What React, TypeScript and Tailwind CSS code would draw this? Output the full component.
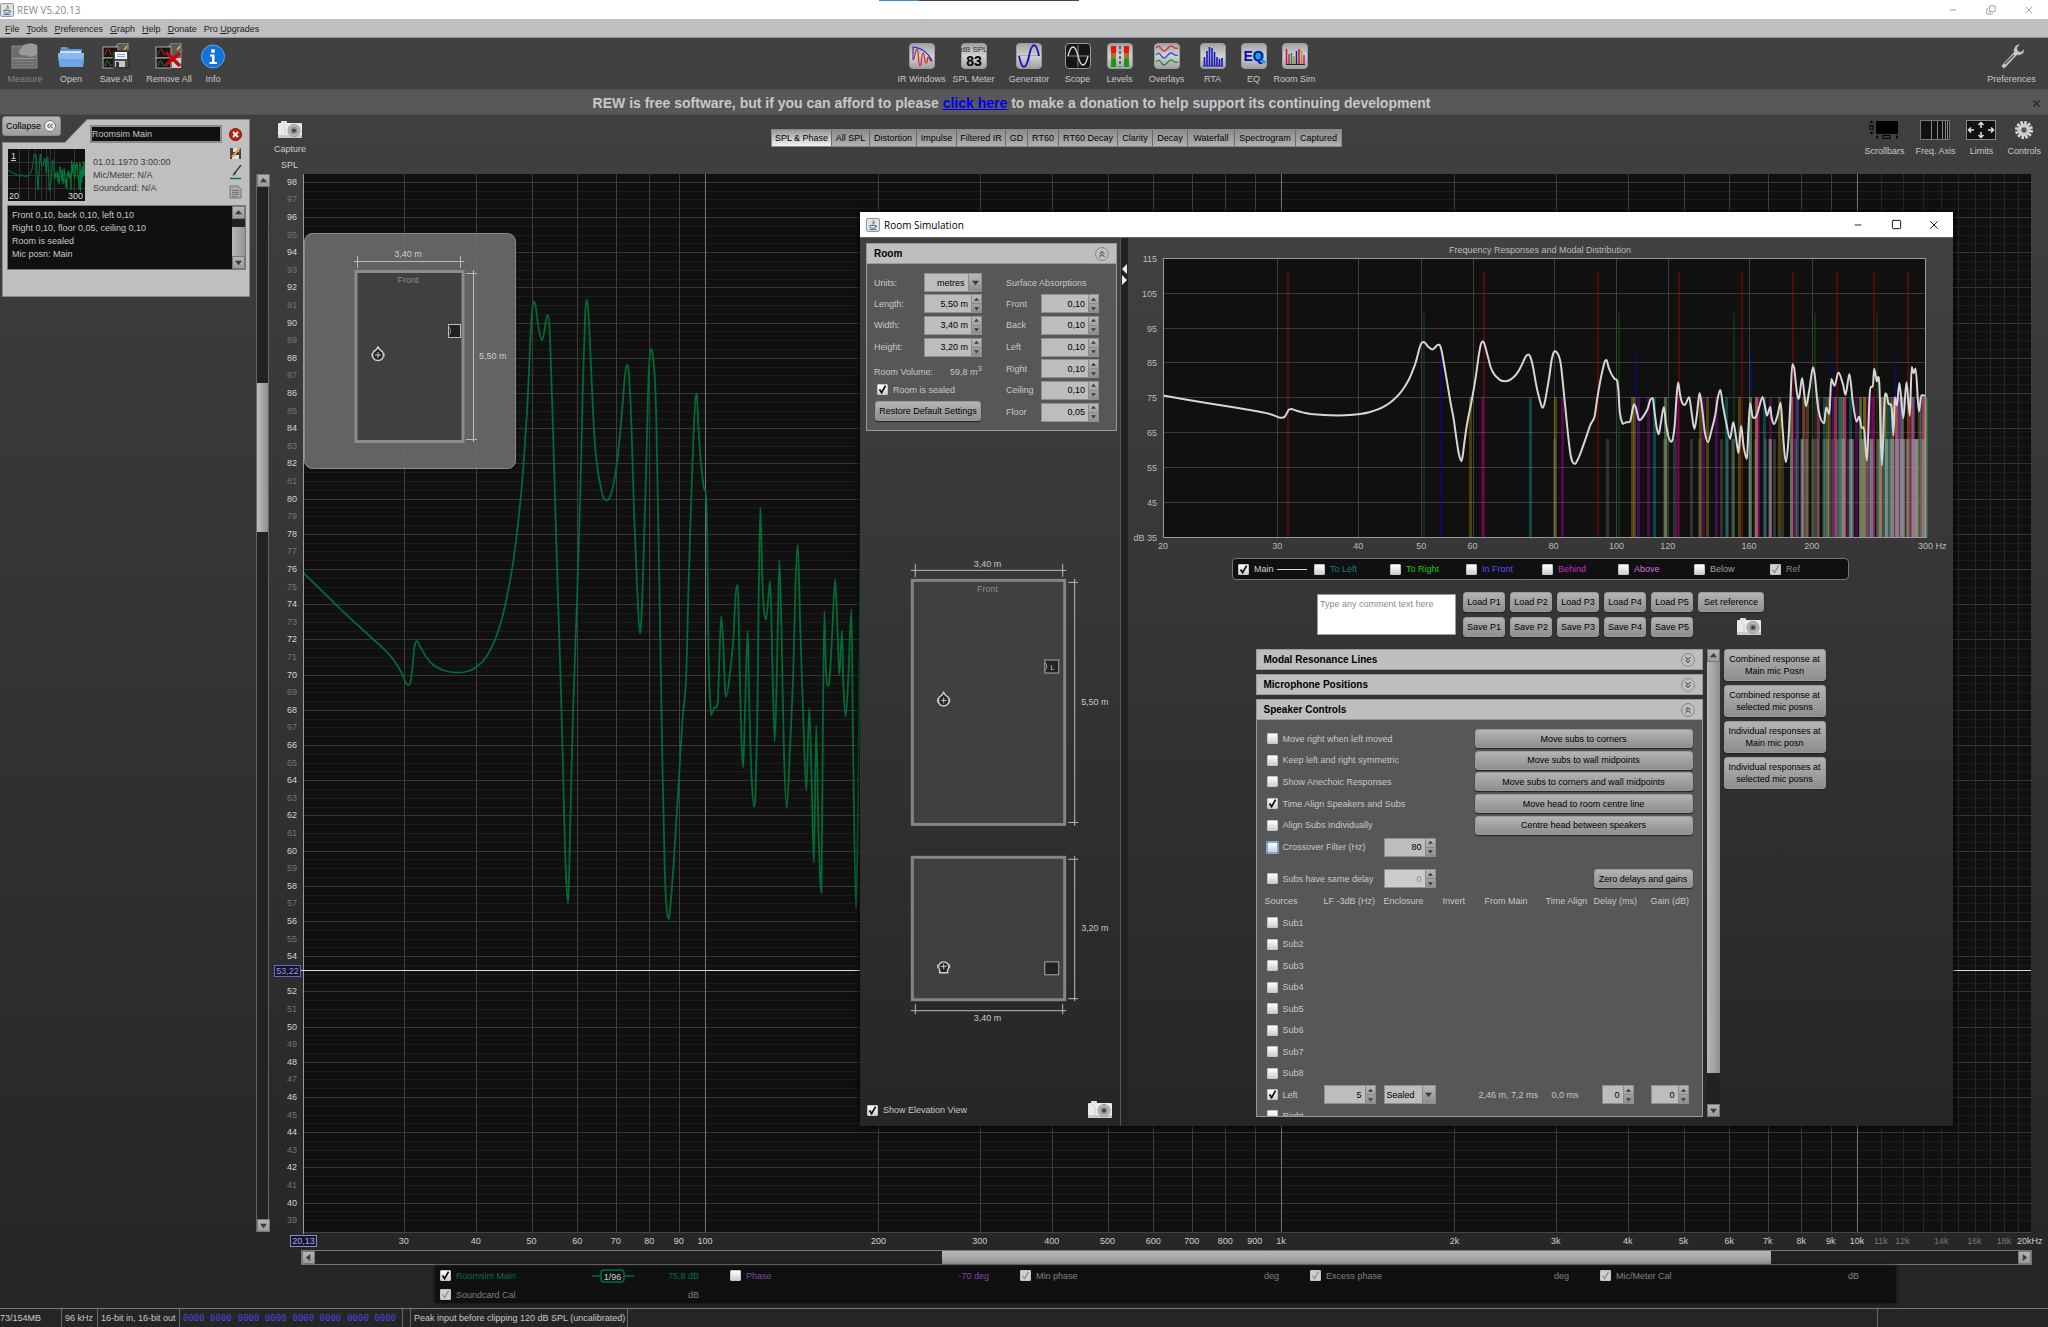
import type { ReactNode } from "react";
import clsx from "clsx";
import { ChevronsDown, ChevronsLeft, ChevronsUp, Copy, Minus, Square, X } from "lucide-react";

// [thousandths of a decade above 20 Hz, dB SPL]
const RESPONSE: [number, number][] = [
  [0, 75.8], [72, 73.5], [145, 71.3], [158, 70.8], [171, 70.1], [179, 69.5], [183, 69.4], [187, 69.6],
  [190, 70.4], [193, 71.5], [195, 71.8], [198, 71.9], [203, 71.6], [215, 70.95], [228, 70.5], [248, 70.2],
  [270, 70.1], [288, 70.2], [304, 70.5], [318, 71], [331, 71.8], [343, 72.9], [354, 74.4], [364, 76.2],
  [372, 78.2], [379, 80.4], [384, 82.5], [389, 85], [392, 87], [395, 89.2], [398, 90.7], [401, 91.2],
  [404, 90.9], [409, 89.7], [415, 89], [419, 89.5], [423, 90.3], [426, 90.4], [429, 89], [433, 85],
  [438, 79.5], [443, 74], [448, 69], [453, 62.5], [456, 59], [460, 57], [462, 58.5], [465, 63],
  [469, 68], [476, 74.5], [482, 81], [486, 86.5], [490, 90.5], [493, 91.3], [496, 90.3], [500, 87.5],
  [505, 84], [510, 82], [516, 80.8], [521, 80.1], [527, 79.9], [533, 80.1], [539, 80.8], [545, 82],
  [550, 83.5], [555, 85.4], [559, 87], [563, 87.6], [566, 87], [570, 84.3], [575, 79], [580, 75],
  [585, 72.3], [588, 73.5], [592, 77.5], [596, 82], [599, 86], [602, 88.1], [604, 88.5], [607, 88.2],
  [610, 87.2], [613, 85], [616, 80], [620, 72.5], [624, 65], [628, 59], [631, 56.8], [635, 56.1],
  [638, 56.9], [643, 59], [651, 63.2], [659, 67.5], [665, 69.7], [669, 74.5], [674, 80], [678, 83.5],
  [682, 85.9], [684, 85.8], [687, 83.8], [691, 82], [696, 80.6], [700, 80], [702, 77], [704, 71],
  [708, 67.9], [710, 67.8], [714, 68.1], [720, 68.4], [722, 70], [726, 73.3], [729, 72.2], [733, 69],
  [735, 68.8], [742, 70.3], [747, 72], [751, 74.5], [755, 75.1], [757, 72], [761, 66.5], [764, 64.7],
  [767, 67.5], [772, 72.5], [775, 68], [779, 64], [783, 62.5], [786, 63.5], [789, 68], [791, 74],
  [794, 79.5], [797, 76], [800, 73.8], [804, 73.1], [811, 75.3], [815, 70.5], [819, 66.2], [823, 70.5],
  [827, 76.5], [831, 72], [835, 65.5], [840, 62.4], [845, 65.5], [851, 70], [855, 75], [859, 77.4],
  [863, 73], [868, 68], [874, 63.4], [879, 68.1], [883, 64], [887, 59.3], [891, 67.1], [895, 61],
  [900, 57.6], [902, 65], [905, 73.6], [908, 70.2], [910, 69.4], [914, 69.7], [919, 72.5], [924, 75.4],
  [928, 72.5], [931, 70], [936, 72.5], [938, 69.5], [942, 67.6], [947, 70], [952, 73.7], [955, 66],
  [960, 56.7], [964, 63], [967, 74.3], [970, 84.8], [973, 83.4], [977, 76.7], [980, 74.8], [985, 80.8],
  [991, 72.7], [996, 77.2], [1002, 83.9], [1005, 81], [1010, 71.9], [1019, 67.8], [1022, 72.4], [1027, 70.5],
  [1030, 80.5], [1035, 78.6], [1041, 82.4], [1048, 79.1], [1052, 76], [1058, 82], [1063, 74.3], [1069, 68.3],
  [1073, 69.8], [1077, 66.5], [1080, 66.7], [1085, 57.1], [1089, 75.3], [1091, 78.3], [1094, 78.3], [1096, 83.5],
  [1100, 80], [1104, 79.3], [1108, 55.7], [1112, 74.3], [1115, 76.2], [1118, 73.5], [1123, 72.4], [1126, 64.3],
  [1128, 75.3], [1131, 72.9], [1135, 79.4], [1141, 69.3], [1146, 79.6], [1151, 70], [1154, 84], [1157, 82.2],
  [1160, 83.6], [1165, 71.2], [1169, 75.9], [1176, 75.7],
];

// cubic through every point, flat at peaks and dips
function smoothPath(pts: number[][]) {
  const slope = pts.map((p, i) => {
    const a = pts[i - 1];
    const b = pts[i + 1];
    if (!a || !b || (p[1] - a[1]) * (b[1] - p[1]) <= 0) return 0;
    return (b[1] - a[1]) / (b[0] - a[0]);
  });
  slope[0] = (pts[1][1] - pts[0][1]) / (pts[1][0] - pts[0][0]);
  return pts.reduce((d, p, i) => {
    if (i === 0) return `M${p[0].toFixed(1)} ${p[1].toFixed(1)}`;
    const q = pts[i - 1];
    const h = (p[0] - q[0]) / 3;
    return `${d}C${(q[0] + h).toFixed(1)} ${(q[1] + slope[i - 1] * h).toFixed(1)} ${(p[0] - h).toFixed(1)} ${(
      p[1] -
      slope[i] * h
    ).toFixed(1)} ${p[0].toFixed(1)} ${p[1].toFixed(1)}`;
  }, "");
}

const mainX = (hz: number) => 705 + 576 * (Math.log10(hz) - 2);
const mainY = (db: number) => 181.7 + (98 - db) * 17.6;
const simX = (hz: number) => 1163 + 648.8 * Math.log10(hz / 20);
const simY = (db: number) => 259 + (115 - db) * 3.4825;

const mainPath = smoothPath(RESPONSE.map(([p, db]) => [303 + p * 0.576, mainY(db)]));
const simPath = smoothPath(RESPONSE.map(([p, db]) => [1163 + p * 0.6488, simY(db)]));
const thumbPath = smoothPath(RESPONSE.map(([p, db]) => [p * 0.0655, 5 + (91.3 - db) * 1.05]));

// colour, top, opacity and width of the line for each kind of mode
const MODE_STYLE: Record<string, [string, number, number, number]> = {
  l: ["#ff0000", 271, 0.28, 2],
  w: ["#009000", 313, 0.28, 2],
  h: ["#0000ff", 355, 0.3, 2],
  lw: ["#d0b000", 397, 0.3, 3],
  lh: ["#d000d0", 397, 0.3, 3],
  wh: ["#00c8c8", 397, 0.3, 3],
  lwh: ["#9a9a9a", 439, 0.24, 3],
};

function roomModes() {
  const out: { f: number; kind: string }[] = [];
  for (let a = 0; a < 11; a++)
    for (let b = 0; b < 7; b++)
      for (let c = 0; c < 7; c++) {
        const kind = (a ? "l" : "") + (b ? "w" : "") + (c ? "h" : "");
        const f = 171.7 * Math.hypot(a / 5.5, b / 3.4, c / 3.2);
        if (kind && f <= 300) out.push({ f, kind });
      }
  return out.sort((p, q) => p.kind.length - q.kind.length);
}

const btn =
  "rounded-[3px] border border-[#9a9a9a] bg-linear-to-b from-[#b4b4b4] to-[#8e8e8e] text-center text-black shadow-[0_1px_1px_#222]";

function Check({
  label,
  checked,
  disabled,
  focus,
  className,
  children,
}: {
  label: string;
  checked?: boolean;
  disabled?: boolean;
  focus?: boolean;
  className?: string;
  children?: ReactNode;
}) {
  return (
    <label className={clsx("flex items-center gap-[5px] whitespace-nowrap", className)}>
      <span className="relative flex shrink-0">
        <input
          type="checkbox"
          defaultChecked={checked}
          disabled={disabled}
          className={clsx(
            "peer size-[11px] appearance-none rounded-[1px] border",
            focus ? "border-[#7fa8d8] ring-1 ring-[#7fa8d8]" : "border-[#c4c4c4]",
            disabled ? "bg-[#cfcfcf]" : "bg-linear-to-b from-white to-[#cfcfcf]",
          )}
        />
        <svg viewBox="0 0 11 11" className="pointer-events-none absolute inset-0 hidden size-[11px] peer-checked:block">
          <path d="M2.5 5.5 4.6 8.6 8.6 1.6" fill="none" stroke={disabled ? "#8a8a8a" : "#111"} strokeWidth={disabled ? 1.2 : 1.8} />
        </svg>
      </span>
      {label}
      {children}
    </label>
  );
}

function Spinner({ id, value, className, disabled, label }: { id: string; value: string; className: string; disabled?: boolean; label?: string }) {
  return (
    <div className={clsx("flex h-[19px] border border-[#8f8f8f]", className, disabled ? "bg-[#cdcdcd]" : "bg-[#bdbdbd]")}>
      <input
        id={id}
        aria-label={label}
        defaultValue={value}
        disabled={disabled}
        className={clsx("w-0 min-w-0 flex-1 pr-[3px] text-right outline-none", disabled ? "text-[#8c8c8c]" : "text-black")}
      />
      <div className="flex w-[10px] flex-col divide-y divide-[#8a8a8a] border-l border-[#8a8a8a] bg-linear-to-b from-[#b8b8b8] to-[#8e8e8e]">
        <button aria-label={`Increase ${id}`} className="flex flex-1 items-center justify-center">
          <Triangle dir="up" small />
        </button>
        <button aria-label={`Decrease ${id}`} className="flex flex-1 items-center justify-center">
          <Triangle dir="down" small />
        </button>
      </div>
    </div>
  );
}

const TRI = { up: "M0 6 4 1 8 6Z", down: "M0 2 4 7 8 2Z", left: "M6 0 1 4 6 8Z", right: "M2 0 7 4 2 8Z" };

function Triangle({ dir, small }: { dir: keyof typeof TRI; small?: boolean }) {
  return (
    <svg viewBox="0 0 8 8" className={small ? "size-[5px]" : "size-[7px]"}>
      <path d={TRI[dir]} fill="#3c3c3c" />
    </svg>
  );
}

function Dropdown({ id, label, options, className }: { id: string; label?: string; options: string[]; className: string }) {
  return (
    <div className={clsx("relative h-[19px] border border-[#8f8f8f] bg-[#bdbdbd] text-black", className)}>
      <select id={id} aria-label={label} className="h-full w-full appearance-none pr-[14px] pl-[2px] outline-none">
        {options.map((o) => (
          <option key={o}>{o}</option>
        ))}
      </select>
      <span className="pointer-events-none absolute inset-y-0 right-0 flex w-[13px] items-center justify-center border-l border-[#8a8a8a] bg-linear-to-b from-[#b8b8b8] to-[#8e8e8e]">
        <Triangle dir="down" />
      </span>
    </div>
  );
}

function ScrollButton({ dir }: { dir: keyof typeof TRI }) {
  return (
    <button
      aria-label={`Scroll ${dir}`}
      className="flex size-[13px] shrink-0 items-center justify-center border border-[#777] bg-linear-to-b from-[#b4b4b4] to-[#9a9a9a]"
    >
      <Triangle dir={dir} />
    </button>
  );
}

function JavaIcon() {
  return (
    <svg viewBox="0 0 14 14" className="size-[14px]">
      <rect x=".5" y=".5" width="13" height="13" rx="1.5" fill="#dde4ea" stroke="#8d99a5" />
      <path d="M7 2c2 1.6-1.6 2.4 0 4.4M9 3.4C7.6 4.4 7.8 5 8.4 6" fill="none" stroke="#d9822b" strokeWidth="1.1" />
      <path d="M4 7.4h5.6v1.4c0 1-1 1.4-2.8 1.4S4 9.8 4 8.8ZM9.6 7.8c1.6-.2 1.4 1.4-.2 1.6M3.4 11.6h7" fill="none" stroke="#4c6f95" strokeWidth="1" />
    </svg>
  );
}

function CameraIcon() {
  return (
    <svg viewBox="0 0 26 18" className="h-[18px] w-[26px]">
      <rect x="4" y="0" width="6" height="4" rx="1" fill="#ddd" />
      <rect x="1" y="2" width="24" height="15" rx="1" fill="#e9e9e9" />
      <path d="M1 14h24v3H1Z" fill="#c9c9c9" />
      <path d="M5 3 8 7v9" stroke="#cdcdcd" fill="none" />
      <circle cx="17" cy="9.5" r="6" fill="#b8b8b8" stroke="#999" />
      <circle cx="17" cy="9.5" r="3.6" fill="#8c8c8c" />
      <circle cx="17" cy="9.5" r="1.8" fill="#333a44" />
    </svg>
  );
}

function Tile({ children, dark }: { children: ReactNode; dark?: boolean }) {
  return (
    <svg viewBox="0 0 26 26" className="size-[26px]">
      <defs>
        <linearGradient id="tile" x1="0" y1="0" x2="0" y2="1">
          <stop offset="0" stopColor="#a2a2a2" />
          <stop offset=".5" stopColor="#d2d2d2" />
          <stop offset="1" stopColor="#a0a0a0" />
        </linearGradient>
      </defs>
      <rect x=".5" y=".5" width="25" height="25" rx="3.5" fill={dark ? "#161616" : "url(#tile)"} stroke="#9c9c9c" />
      {children}
    </svg>
  );
}

function DocStack({ children }: { children: ReactNode }) {
  return (
    <svg viewBox="0 0 28 26" className="h-[26px] w-[28px]">
      <path d="M14 3 17 0h9v20H14Z" fill="#5a5a5a" stroke="#999" />
      <rect x="1" y="4" width="15" height="11" fill="#161616" stroke="#aaa" />
      <rect x="1" y="15" width="15" height="10" fill="#161616" stroke="#aaa" />
      <path d="M3 12c2-7 4-7 5-3s2 3 4 0" fill="none" stroke="#e02020" />
      <path d="M3 23c1-6 3-6 4-3s2 3 4 2" fill="none" stroke="#18a040" />
      <path d="m22 7 3-4" stroke="#e0b040" strokeWidth="1.5" />
      {children}
    </svg>
  );
}

const leftTools = [
  {
    label: "Measure",
    width: "w-[46px]",
    dim: true,
    icon: (
      <svg viewBox="0 0 28 26" className="h-[26px] w-[28px]">
        <rect x="1" y="3" width="25" height="22" fill="#6e6e6e" stroke="#8a8a8a" />
        <path d="M8 9c0-3 2-3 3-5 1-2 3-3 5-3 3-1 5-1 7 0 2 0 3 1 3 3v7l-5 3c-3 0-4-1-6-2-3 1-7 0-7-3Z" fill="#9a9a9a" />
        <path d="M2 15.5h23" stroke="#999" />
        <path d="M4 18.5h8m2 0h8M4 21.5h8m2 0h8" stroke="#858585" strokeDasharray="2 1" />
      </svg>
    ),
  },
  {
    label: "Open",
    width: "w-[46px]",
    icon: (
      <svg viewBox="0 0 28 26" className="h-[26px] w-[28px]">
        <path d="M3 9 4 4h6l2 2h13v6H3Z" fill="#5d97d6" />
        <path d="M3 8h21v5H3Z" fill="#cfe2f8" />
        <path d="M1 10h26v3l-1 11H3L1 13Z" fill="#8ab9ee" />
        <path d="M1 16h26l-1 8H3Z" fill="#6ea5e4" />
      </svg>
    ),
  },
  {
    label: "Save All",
    width: "w-[44px]",
    icon: (
      <DocStack>
        <rect x="11" y="8" width="16" height="17" rx="1" fill="#4c4c4c" stroke="#222" />
        <rect x="13" y="9" width="12" height="7" fill="#f0f0f0" />
        <path d="M15 11.5h8M15 13.5h8" stroke="#7aa7d8" />
        <rect x="13" y="18" width="10" height="6" fill="#c8c8c8" />
        <rect x="14" y="19" width="3" height="5" fill="#333" />
      </DocStack>
    ),
  },
  {
    label: "Remove All",
    width: "w-[62px]",
    icon: (
      <DocStack>
        <path d="M17 15h9v10h-9Z" fill="#ccc" />
        <path d="M11 9 25 23M25 10 11 22" stroke="#c00808" strokeWidth="3.2" />
      </DocStack>
    ),
  },
  {
    label: "Info",
    width: "w-[26px]",
    icon: (
      <svg viewBox="0 0 26 26" className="size-[26px]">
        <circle cx="13" cy="13.5" r="11.5" fill="#1473d8" stroke="#5aa5f0" strokeWidth="1" />
        <circle cx="13" cy="8" r="2" fill="#fff" />
        <path d="M10 11.5h4.5V19H17v2H9.5v-2H12v-5.5h-2Z" fill="#fff" />
      </svg>
    ),
  },
];

const centreTools = [
  {
    label: "IR Windows",
    width: "w-[52px]",
    icon: (
      <Tile>
        <path d="M3 4c8 0 16 5 20 14" fill="none" stroke="#2020c0" strokeWidth="1.2" />
        <path d="M4 5v12" stroke="#2020c0" />
        <path d="M4 17c2 0 2-11 4-11s1 17 3 17 1-13 3-13 1 10 3 10 1-6 2-6 2 5 4 4" fill="none" stroke="#d02020" strokeWidth="1.2" />
      </Tile>
    ),
  },
  {
    label: "SPL Meter",
    width: "w-[52px]",
    icon: (
      <Tile>
        <text x="13" y="9" textAnchor="middle" fontSize="8" fill="#333">dB SPL</text>
        <text x="13" y="23" textAnchor="middle" fontSize="14" fontWeight="700" fill="#000">83</text>
      </Tile>
    ),
  },
  {
    label: "Generator",
    width: "w-[59px]",
    icon: (
      <Tile>
        <path d="M2 12.5h22M13.5 2v22" stroke="#999" strokeWidth=".8" />
        <path d="M3 13c3 15 7 14 10 0s7-15 10 0" fill="none" stroke="#1010c8" strokeWidth="1.8" />
      </Tile>
    ),
  },
  {
    label: "Scope",
    width: "w-[38px]",
    icon: (
      <Tile dark>
        <path d="M2 13h22M13 2v22" stroke="#888" />
        <path d="M3 13c3-12 7-12 10 0s7 12 10 0" fill="none" stroke="#ddd" strokeWidth="1.3" />
      </Tile>
    ),
  },
  {
    label: "Levels",
    width: "w-[46px]",
    icon: (
      <Tile>
        {[4, 17].map((x) => (
          <g key={x}>
            <rect x={x} y="3" width="5" height="8" fill="#f01010" />
            <rect x={x} y="10" width="5" height="7" fill="#a07820" />
            <rect x={x} y="16" width="5" height="8" fill="#10a010" />
          </g>
        ))}
        <path d="M13 3v21" stroke="#666" strokeWidth="2" strokeDasharray="3 2" />
      </Tile>
    ),
  },
  {
    label: "Overlays",
    width: "w-[48px]",
    icon: (
      <Tile>
        {["#d83030", "#3848c8", "#209030"].map((c, i) => (
          <path key={c} d={`M2 ${5 + i * 7}c4-5 5 3 8 3s4-5 7-5 3 4 7 2`} fill="none" stroke={c} strokeWidth="1.3" />
        ))}
      </Tile>
    ),
  },
  {
    label: "RTA",
    width: "w-[44px]",
    icon: (
      <Tile>
        <path d="M4.5 23v-9M7 23V8M9.5 23V4M12 23V5M14.5 23V9M17 23v-9M19.5 23v-7M22 23v-8" stroke="#1818b8" strokeWidth="1.6" />
        <path d="M3 23h20" stroke="#1818b8" />
      </Tile>
    ),
  },
  {
    label: "EQ",
    width: "w-[38px]",
    icon: (
      <Tile>
        <circle cx="17.5" cy="13" r="5.5" fill="#10b0c0" />
        <path d="m20 16 4 4" stroke="#10b0c0" strokeWidth="3" />
        <text x="12.5" y="18" textAnchor="middle" fontSize="14" fontWeight="700" fill="#0a0ac0">EQ</text>
      </Tile>
    ),
  },
  {
    label: "Room Sim",
    width: "w-[44px]",
    icon: (
      <Tile>
        {["#c01818", "#c018a0", "#209020", "#b09010", "#1818c0", "#c01818", "#d08010", "#c018a0"].map((c, i) => (
          <path key={i} d={`M${4.5 + i * 2.5} 21V${[6, 11, 10, 13, 8, 6, 8, 12][i]}`} stroke={c} strokeWidth="1.5" />
        ))}
        <path d="M4 21.5h19" stroke="#222" />
      </Tile>
    ),
  },
];

const graphTools = [
  {
    label: "Scrollbars",
    icon: (
      <svg viewBox="0 0 30 20" className="h-[20px] w-[30px]">
        <rect x="7" y="1" width="22" height="13" fill="#000" />
        <path d="m.5 3 2-2.5 2 2.5ZM.5 12l2 2.5 2-2.5ZM9 15l-2.5 2L9 19ZM27 15l2.5 2L27 19Z" fill="#000" />
        <rect x="1" y="5.5" width="3" height="4" fill="none" stroke="#000" />
        <rect x="14" y="15.5" width="7" height="3" fill="none" stroke="#000" />
      </svg>
    ),
  },
  {
    label: "Freq. Axis",
    icon: (
      <svg viewBox="0 0 30 20" className="h-[20px] w-[30px]">
        <rect x=".5" y=".5" width="29" height="19" fill="#111" stroke="#777" />
        <path d="M11.5 1v18M17.5 1v18M22.5 1v18M25.5 1v18M27.5 1v18" stroke="#888" />
      </svg>
    ),
  },
  {
    label: "Limits",
    icon: (
      <svg viewBox="0 0 30 20" className="h-[20px] w-[30px]">
        <rect x=".5" y=".5" width="29" height="19" fill="#111" stroke="#888" />
        <path
          d="M15 8V2.5M12.5 5 15 2.5 17.5 5M15 12v5.5M12.5 15l2.5 2.5 2.5-2.5M8 10H2.5M5 7.5 2.5 10 5 12.5M22 10h5.5M25 7.5l2.5 2.5-2.5 2.5"
          fill="none"
          stroke="#e0e0e0"
          strokeWidth="1.5"
        />
      </svg>
    ),
  },
  {
    label: "Controls",
    icon: (
      <svg viewBox="0 0 20 20" className="size-[20px]">
        <circle cx="10" cy="10" r="7.5" fill="none" stroke="#d8d8d8" strokeWidth="3" strokeDasharray="2.5 1.43" />
        <circle cx="10" cy="10" r="6.5" fill="#d0d0d0" />
        <circle cx="10" cy="10" r="3" fill="#555" stroke="#aaa" />
      </svg>
    ),
  },
];

const tabs = [
  ["SPL & Phase", "w-[60px]"],
  ["All SPL", "w-[38px]"],
  ["Distortion", "w-[47px]"],
  ["Impulse", "w-[40px]"],
  ["Filtered IR", "w-[49px]"],
  ["GD", "w-[22px]"],
  ["RT60", "w-[31px]"],
  ["RT60 Decay", "w-[59px]"],
  ["Clarity", "w-[35px]"],
  ["Decay", "w-[35px]"],
  ["Waterfall", "w-[47px]"],
  ["Spectrogram", "w-[61px]"],
  ["Captured", "w-[45px]"],
];

function MeasurementCard() {
  return (
    <div className="relative mt-[1px] h-[181px] px-[2px]">
      <svg viewBox="0 0 248 178" className="absolute top-[3px] left-[2px] h-[178px] w-[248px]">
        <path d="M.5 23.5H63L85 .5h162.5v177H.5Z" fill="#bfbfbf" stroke="#8a8a8a" />
      </svg>
      <button className="relative flex h-[20px] w-[59px] items-center justify-between rounded-[3px] border border-[#888] bg-linear-to-b from-[#b8b8b8] to-[#9e9e9e] pr-[4px] pl-[3px] text-black">
        Collapse
        <span className="rounded-full border border-[#777] bg-[#eee]">
          <ChevronsLeft className="size-[10px]" />
        </span>
      </button>
      <div className="relative -mt-[11px] ml-[88px] flex items-center gap-[7px]">
        <input
          aria-label="Measurement name"
          defaultValue="Roomsim Main"
          className="h-[18px] w-[132px] border-2 border-[#8a8a8a] bg-[#101010] text-[#c8c8c8] outline-none"
        />
        <button aria-label="Remove measurement">
          <svg viewBox="0 0 13 13" className="size-[13px]">
            <circle cx="6.5" cy="6.5" r="6" fill="#c42018" stroke="#7a1008" />
            <path d="m4 4 5 5m0-5L4 9" stroke="#fff" strokeWidth="1.8" />
          </svg>
        </button>
      </div>
      <div className="relative mt-[6px] ml-[6px] flex">
        <svg viewBox="0 0 77 52" className="h-[52px] w-[77px] bg-[#101010]">
          <path d="M11.5 0v52M20.5 0v52M27.5 0v52M33.5 0v52M38.5 0v52M42.5 0v52M46.5 0v52M66.5 0v52M0 13.5h77M0 26.5h77M0 39.5h77" stroke="#343434" />
          <path d={thumbPath} fill="none" stroke="#008040" strokeWidth="1" />
          <text x="3" y="10" fontSize="9" fill="#ddd" textDecoration="underline">1</text>
          <text x="1" y="50" fontSize="9" fill="#ddd">20</text>
          <text x="75" y="50" fontSize="9" fill="#ddd" textAnchor="end">300</text>
        </svg>
        <div className="mt-[7px] ml-[8px] flex-1 leading-[13px] text-[#3c3c3c]">
          <p>01.01.1970 3:00:00</p>
          <p>Mic/Meter: N/A</p>
          <p>Soundcard: N/A</p>
        </div>
        <div className="mr-[7px] flex w-[13px] flex-col justify-between pb-[2px]">
          <svg viewBox="0 0 13 13" className="-mt-[2px] size-[13px]">
            <path d="M1 1h11v11H1Z" fill="#444" />
            <path d="M4 1h6v4H4ZM3 8h7v4H3Z" fill="#ddd" />
            <path d="m3 10 8-9" stroke="#e0a030" strokeWidth="2" />
          </svg>
          <svg viewBox="0 0 13 15" className="h-[15px] w-[13px]">
            <path d="M12 0 5 9" stroke="#333" strokeWidth="1.3" />
            <path d="m6 7-3 4 4-2" fill="#333" />
            <path d="M1 13.5h11" stroke="#0a7050" strokeWidth="1.5" />
          </svg>
          <svg viewBox="0 0 13 14" className="h-[14px] w-[13px]">
            <path d="M1 1h8l3 3v9H1Z" fill="#a8a8a8" stroke="#7a7a7a" />
            <path d="M3 5.5h7M3 7.5h7M3 9.5h7M3 11.5h5" stroke="#7a7a7a" />
          </svg>
        </div>
      </div>
      <div className="relative mt-[4px] ml-[5px] flex h-[65px] w-[239px] border border-[#777] bg-[#101010]">
        <div className="flex-1 overflow-hidden pt-[3px] pl-[4px] leading-[13px] text-[#c8c8c8]">
          <p>Front 0,10, back 0,10, left 0,10</p>
          <p>Right 0,10, floor 0,05, ceiling 0,10</p>
          <p>Room is sealed</p>
          <p>Mic posn: Main</p>
        </div>
        <div className="flex w-[13px] flex-col bg-linear-to-r from-[#b8b8b8] to-[#949494]">
          <ScrollButton dir="up" />
          <div className="h-[8px] bg-[#222]" />
          <div className="flex-1" />
          <ScrollButton dir="down" />
        </div>
      </div>
    </div>
  );
}

function Head({ x, y, front }: { x: number; y: number; front?: boolean }) {
  return (
    <g transform={`translate(${x} ${y})`} fill="none" stroke="#ccc">
      {front ? (
        <path d="M-4 6.5v-3a5 5 0 1 1 8 0v3Z" fill="#222" strokeWidth="1.5" />
      ) : (
        <path d="M0-8-2-5a5.5 5.5 0 1 0 4 0Z" fill="#222" strokeWidth="1.5" />
      )}
      <path d="M-6-2v4M6-2v4" />
      <path d="M-3 0h6M0-3v6" />
    </g>
  );
}

function MainChart() {
  const majors = [30, 40, 50, 60, 70, 80, 90, 200, 300, 400, 500, 600, 700, 800, 900, 2000, 3000, 4000, 5000, 6000, 7000, 8000, 9000];
  const minors = [11, 12, 13, 14, 15, 16, 17, 18, 19].map((k) => k * 1000);
  const bright = [...majors, 100, 1000, 10000];
  const name = (hz: number) => (hz >= 1000 ? `${hz / 1000}k` : `${hz}`);
  return (
    <svg viewBox="270 158 1778 1092" className="block h-auto w-full" fontSize="9">
      <rect x="303" y="174" width="1728" height="1058" fill="#101010" />
      {Array.from({ length: 119 }, (_, i) => 98 - i / 2).map((db) => (
        <rect key={db} x="303" y={Math.round(mainY(db))} width="1728" height="1" fill={db % 2 === 0 ? "#363636" : "#1d1d1d"} />
      ))}
      {majors.map((hz) => (
        <rect key={hz} x={Math.round(mainX(hz))} y="174" width="1" height="1058" fill="#3c3c3c" />
      ))}
      {minors.map((hz) => (
        <rect key={hz} x={Math.round(mainX(hz))} y="174" width="1" height="1058" fill="#272727" />
      ))}
      {[100, 1000, 10000].map((hz) => (
        <rect key={hz} x={Math.round(mainX(hz))} y="174" width="1" height="1058" fill="#777" />
      ))}
      <path d="M303 1232.5h1728" stroke="#444" />
      <path d={mainPath} fill="none" stroke="#006b36" strokeWidth="1.8" />
      <rect x="303" y="174" width="1" height="1060" fill="#999" />
      <rect x="301" y="970" width="1730" height="1" fill="#ddd" />

      <text x="281" y="168" fill="#ccc">SPL</text>
      {Array.from({ length: 60 }, (_, i) => 98 - i)
        .filter((db) => db !== 53)
        .map((db) => (
          <text key={db} x="297" y={mainY(db) + 3} textAnchor="end" fill={db % 2 === 0 ? "#d4d4d4" : "#747474"}>
            {db}
          </text>
        ))}
      {bright.map((hz) => (
        <text key={hz} x={mainX(hz)} y="1244" textAnchor="middle" fill="#d0d0d0">
          {name(hz)}
        </text>
      ))}
      {[11000, 12000, 14000, 16000, 18000].map((hz) => (
        <text key={hz} x={mainX(hz)} y="1244" textAnchor="middle" fill="#777">
          {name(hz)}
        </text>
      ))}
      <text x="2017" y="1244" fill="#d0d0d0">20kHz</text>
      <rect x="274.5" y="965.5" width="26" height="11" fill="#161628" stroke="#6868c8" />
      <text x="287.5" y="974" textAnchor="middle" fill="#9494e8">53,22</text>
      <rect x="290.5" y="1235.5" width="26" height="11" fill="#161628" stroke="#8888d8" />
      <text x="303.5" y="1244" textAnchor="middle" fill="#a4a4f0">20,13</text>

      <g>
        <rect x="304.5" y="233.5" width="211" height="235" rx="8" fill="#6e6e6e" fillOpacity=".88" stroke="#8a8a8a" />
        <rect x="356" y="271.5" width="107" height="170" fill="#404040" stroke="#8c8c8c" strokeWidth="3" />
        <path d="M354 261.5h110M357.5 256v12M460.5 256v12M473.5 270v172M466 273.5h11M466 439.5h11" stroke="#bbb" fill="none" />
        <text x="408" y="257" textAnchor="middle" fill="#ccc">3,40 m</text>
        <text x="408" y="283" textAnchor="middle" fill="#8c8c8c">Front</text>
        <text x="479" y="359" fill="#ccc">5,50 m</text>
        <rect x="448.5" y="324.5" width="12" height="13" fill="#222" stroke="#bbb" />
        <path d="M449 327c2 3 2 5 0 8" stroke="#999" fill="none" />
        <Head x={378} y={355} />
      </g>
    </svg>
  );
}

function SimChart() {
  return (
    <svg viewBox="1128 238 825 317" className="block h-auto w-full" fontSize="9" fill="#bbb">
      <text x="1540" y="253" textAnchor="middle">Frequency Responses and Modal Distribution</text>
      <rect x="1163" y="259" width="763" height="279" fill="#101010" />
      {[105, 95, 85, 75, 65, 55, 45].map((db) => (
        <rect key={db} x="1163" y={Math.round(simY(db)) - 1} width="763" height="1" fill="#3a3a3a" />
      ))}
      {[30, 40, 50, 60, 80, 100, 120, 160, 200].map((hz) => (
        <rect key={hz} x={Math.round(simX(hz))} y="259" width="1" height="279" fill="#3e3e3e" />
      ))}
      {roomModes().map(({ f, kind }, i) => {
        const [color, top, opacity, width] = MODE_STYLE[kind];
        return <rect key={i} x={Math.round(simX(f)) - 1} y={top} width={width} height={538 - top} fill={color} opacity={opacity} />;
      })}
      <path d={simPath} fill="none" stroke="#d6d6d6" strokeWidth="2" />
      <rect x="1163.5" y="258.5" width="762" height="279" fill="none" stroke="#999" />
      {[115, 105, 95, 85, 75, 65, 55, 45].map((db) => (
        <text key={db} x="1157" y={simY(db) + 3} textAnchor="end">{db}</text>
      ))}
      <text x="1157" y="541" textAnchor="end">dB 35</text>
      {[20, 30, 40, 50, 60, 80, 100, 120, 160, 200].map((hz) => (
        <text key={hz} x={simX(hz)} y="549" textAnchor="middle">{hz}</text>
      ))}
      <text x="1918" y="549">300 Hz</text>
    </svg>
  );
}

// plan above, elevation below, each with its dimension lines
function RoomPlan() {
  return (
    <svg viewBox="860 540 261 490" className="block h-auto w-full" fontSize="9" fill="#c8c8c8">
      <path d="M911 568.5h156M915.5 562v13M1063.5 562v13M1075.5 577v248M1069 580.5h10M1069 821.5h10" stroke="#bbb" fill="none" />
      <rect x="912.5" y="578.5" width="153" height="245" fill="#404040" stroke="#858585" strokeWidth="3" />
      <text x="988" y="565" textAnchor="middle">3,40 m</text>
      <text x="988" y="590" textAnchor="middle" fill="#8c8c8c">Front</text>
      <text x="1082" y="704">5,50 m</text>
      <rect x="1045.5" y="658.5" width="14" height="13" fill="#222" stroke="#aaa" />
      <path d="M1046 661c2 3 2 5 0 8" stroke="#aaa" fill="none" />
      <text x="1051" y="668" fontSize="8">L</text>
      <Head x={944} y={699} />
      <rect x="912.5" y="856.5" width="153" height="143" fill="#404040" stroke="#858585" strokeWidth="3" />
      <path d="M911 1010.5h156M915.5 1004v10M1063.5 1004v10M1075.5 855v146M1069 858.5h10M1069 998.5h10" stroke="#bbb" fill="none" />
      <text x="1082" y="931">3,20 m</text>
      <text x="988" y="1021" textAnchor="middle">3,40 m</text>
      <rect x="1045.5" y="961.5" width="14" height="13" fill="#222" stroke="#aaa" />
      <Head x={944} y={966} front />
    </svg>
  );
}

function PanelHeader({ title, open }: { title: string; open?: boolean }) {
  return (
    <div className="flex h-[21px] items-center justify-between border border-[#9a9a9a] bg-[#bebebe] px-[7px] text-[10px] font-bold text-black">
      {title}
      <button aria-label={`Toggle ${title}`} className="rounded-full border border-[#888] p-px">
        {open ? <ChevronsUp className="size-[10px]" /> : <ChevronsDown className="size-[10px]" />}
      </button>
    </div>
  );
}

function RoomPanel() {
  return (
    <section className="mt-[5px] mr-[3px] ml-[6px]">
      <PanelHeader title="Room" open />
      <div className="flex gap-[24px] border border-t-0 border-[#9a9a9a] bg-[#575757] px-[7px] pt-[8px] pb-[7px]">
        <div className="w-[108px]">
          <div className="flex h-[21px] items-center justify-between">
            <label htmlFor="units">Units:</label>
            <Dropdown id="units" options={["metres", "feet"]} className="w-[58px] [&_select]:pl-[12px]" />
          </div>
          <div className="grid h-[65px] grid-rows-3">
            {[
              ["Length", "5,50 m"],
              ["Width", "3,40 m"],
              ["Height", "3,20 m"],
            ].map(([name, value]) => (
              <div key={name} className="flex items-center justify-between">
                <label htmlFor={name}>{name}:</label>
                <Spinner id={name} value={value} className="w-[58px]" />
              </div>
            ))}
          </div>
          <div className="mt-[4px] flex h-[20px] items-center justify-between">
            <span>Room Volume:</span>
            <span>
              59,8 m<sup className="text-[8px]">3</sup>
            </span>
          </div>
          <Check label="Room is sealed" checked className="ml-[3px] h-[15px]" />
          <button className={clsx(btn, "mt-[4px] ml-[1px] h-[20px] w-[106px] whitespace-nowrap")}>Restore Default Settings</button>
        </div>
        <div className="w-[93px]">
          <div className="flex h-[21px] items-center whitespace-nowrap">Surface Absorptions</div>
          <div className="grid h-[130px] grid-rows-6">
            {[
              ["Front", "0,10"],
              ["Back", "0,10"],
              ["Left", "0,10"],
              ["Right", "0,10"],
              ["Ceiling", "0,10"],
              ["Floor", "0,05"],
            ].map(([name, value]) => (
              <div key={name} className="flex items-center justify-between">
                <label htmlFor={`abs-${name}`}>{name}</label>
                <Spinner id={`abs-${name}`} value={value} className="w-[58px]" />
              </div>
            ))}
          </div>
        </div>
      </div>
    </section>
  );
}

const speakerOptions: [string, string, boolean][] = [
  ["Move right when left moved", "Move subs to corners", false],
  ["Keep left and right symmetric", "Move subs to wall midpoints", false],
  ["Show Anechoic Responses", "Move subs to corners and wall midpoints", false],
  ["Time Align Speakers and Subs", "Move head to room centre line", true],
  ["Align Subs Individually", "Centre head between speakers", false],
];

function SpeakerControls() {
  return (
    <section className="mt-[4px] flex min-h-0 flex-1 flex-col">
      <PanelHeader title="Speaker Controls" open />
      <div className="min-h-0 flex-1 overflow-hidden border border-t-0 border-[#9a9a9a] bg-[#575757] pt-[8px] pr-[9px] pl-[10px]">
        <div className="grid h-[108px] grid-rows-5">
          {speakerOptions.map(([option, action, on]) => (
            <div key={option} className="flex items-center justify-between">
              <Check label={option} checked={on} />
              <button className={clsx(btn, "h-[19px] w-[218px]")}>{action}</button>
            </div>
          ))}
        </div>
        <div className="flex h-[22px] items-center">
          <Check label="Crossover Filter (Hz)" focus className="w-[117px]" />
          <Spinner id="crossover" label="Crossover frequency" value="80" className="w-[52px]" />
        </div>
        <div className="mt-[10px] flex h-[21px] items-center">
          <Check label="Subs have same delay" className="w-[117px]" />
          <Spinner id="sub-delay" label="Sub delay" value="0" disabled className="w-[52px]" />
          <button className={clsx(btn, "ml-auto h-[19px] w-[99px]")}>Zero delays and gains</button>
        </div>
        <table className="w-full table-fixed [&_th]:p-0 [&_th]:text-left [&_th]:font-normal [&_th]:whitespace-nowrap">
          <thead>
            <tr className="h-[23px]">
              <th className="w-[57px]"><span className="-ml-[2px]">Sources</span></th>
              <th className="w-[60px]">LF -3dB (Hz)</th>
              <th className="w-[59px]">Enclosure</th>
              <th className="w-[42px]">Invert</th>
              <th className="w-[61px]">From Main</th>
              <th className="w-[48px]">Time Align</th>
              <th className="w-[57px]">Delay (ms)</th>
              <th>Gain (dB)</th>
            </tr>
          </thead>
          <tbody>
            <tr>
              <td className="p-0">
                <div className="grid h-[172px] grid-rows-8">
                  {[1, 2, 3, 4, 5, 6, 7, 8].map((n) => (
                    <Check key={n} label={`Sub${n}`} />
                  ))}
                </div>
              </td>
            </tr>
            <tr className="h-[21px] whitespace-nowrap">
              <td className="p-0"><Check label="Left" checked /></td>
              <td className="p-0"><Spinner id="lf" label="LF -3dB" value="5" className="w-[52px]" /></td>
              <td className="p-0"><Dropdown id="enclosure" label="Enclosure" options={["Sealed", "Ported"]} className="w-[52px]" /></td>
              <td />
              <td className="p-0"><span className="-ml-[6px]">2,46 m, 7,2 ms</span></td>
              <td className="p-0 pl-[6px]">0,0 ms</td>
              <td className="p-0 pl-[8px]"><Spinner id="delay" label="Delay" value="0" className="w-[32px]" /></td>
              <td className="p-0"><Spinner id="gain" label="Gain" value="0" className="w-[38px]" /></td>
            </tr>
            <tr className="h-[21px]">
              <td className="p-0"><Check label="Right" /></td>
            </tr>
          </tbody>
        </table>
      </div>
    </section>
  );
}

const positions: [string, string, boolean, boolean][] = [
  ["Main", "text-[#d0d0d0]", true, false],
  ["To Left", "text-[#0f7f78]", false, false],
  ["To Right", "text-[#10c810]", false, false],
  ["In Front", "text-[#5454ee]", false, false],
  ["Behind", "text-[#c22cc2]", false, false],
  ["Above", "text-[#d070e0]", false, false],
  ["Below", "text-[#a0a0a0]", false, false],
  ["Ref", "text-[#888]", true, true],
];

function RoomSimWindow() {
  return (
    <div
      role="dialog"
      aria-label="Room Simulation"
      className="absolute top-[212px] right-[95px] left-[860px] flex flex-col bg-linear-to-b from-[#424242] to-[#262626] shadow-[0_0_6px_#000]"
    >
      <div className="flex h-[25px] items-center bg-white pl-[6px] font-['Open_Sans',sans-serif] text-[10px] text-black">
        <JavaIcon />
        <span className="ml-[4px] flex-1">Room Simulation</span>
        <button aria-label="Minimize" className="w-[38px]"><Minus className="mx-auto size-[10px]" strokeWidth={2} /></button>
        <button aria-label="Maximize" className="w-[38px]"><Square className="mx-auto size-[11px]" strokeWidth={2} /></button>
        <button aria-label="Close" className="w-[38px]"><X className="mx-auto size-[14px]" strokeWidth={1.5} /></button>
      </div>
      <div className="flex border-t border-[#666]">
        <div className="flex w-[261px] shrink-0 flex-col border-r border-[#555]">
          <RoomPanel />
          <div className="mt-auto">
            <RoomPlan />
          </div>
          <div className="mt-[71px] flex items-center justify-between px-[7px] pb-[7px]">
            <Check label="Show Elevation View" checked />
            <button aria-label="Capture room view"><CameraIcon /></button>
          </div>
        </div>
        <div className="w-[7px] shrink-0 bg-[#222] pt-[25px]">
          <svg viewBox="0 0 7 24" className="h-[24px] w-[7px]" fill="#eee">
            <path d="M6 1v10L1 6ZM1 12v10l5-5Z" />
          </svg>
        </div>
        <div className="min-w-0 flex-1">
          <SimChart />
          <div className="mx-auto mt-[3px] flex h-[22px] w-[617px] items-center rounded-[4px] border border-[#777] bg-[#101010] pl-[5px]">
            {positions.map(([name, color, on, off]) => (
              <Check key={name} label={name} checked={on} disabled={off} className={clsx("w-[76px]", color)}>
                {name === "Main" && <span className="-ml-[2px] h-px w-[30px] bg-[#ddd]" />}
              </Check>
            ))}
          </div>
          <div className="mx-auto mt-[12px] flex w-[447px] items-start">
            <textarea
              aria-label="Comment"
              placeholder="Type any comment text here"
              className="mt-[2px] h-[41px] w-[139px] resize-none border border-[#999] bg-white px-[2px] pt-[3px] leading-[13px] placeholder:text-[#8a8a8a]"
            />
            <div className="ml-[7px] flex flex-1 flex-col gap-[5px]">
              {["Load", "Save"].map((verb) => (
                <div key={verb} className="flex h-[20px] items-center gap-[5px]">
                  {[1, 2, 3, 4, 5].map((n) => (
                    <button key={n} className={clsx(btn, "h-[20px] w-[42px]")}>{`${verb} P${n}`}</button>
                  ))}
                  {verb === "Load" ? (
                    <button className={clsx(btn, "h-[20px] flex-1")}>Set reference</button>
                  ) : (
                    <button aria-label="Capture graph" className="mr-[2px] ml-auto"><CameraIcon /></button>
                  )}
                </div>
              ))}
            </div>
          </div>
          <div className="mx-auto mt-[12px] mb-[9px] flex h-[468px] w-[570px]">
            <div className="flex w-[447px] flex-col">
              <PanelHeader title="Modal Resonance Lines" />
              <div className="mt-[4px]">
                <PanelHeader title="Microphone Positions" />
              </div>
              <SpeakerControls />
            </div>
            <div className="ml-[4px] flex w-[13px] flex-col bg-[#222]">
              <ScrollButton dir="up" />
              <div className="flex-1 bg-linear-to-r from-[#b8b8b8] to-[#8e8e8e]" />
              <div className="h-[31px]" />
              <ScrollButton dir="down" />
            </div>
            <div className="ml-[4px] flex flex-1 flex-col gap-[4px] leading-[12px]">
              {[
                ["Combined response at", "Main mic Posn"],
                ["Combined response at", "selected mic posns"],
                ["Individual responses at", "Main mic posn"],
                ["Individual responses at", "selected mic posns"],
              ].map(([a, b]) => (
                <button key={a + b} className={clsx(btn, "h-[32px] whitespace-nowrap")}>
                  {a}
                  <br />
                  {b}
                </button>
              ))}
            </div>
          </div>
        </div>
      </div>
    </div>
  );
}

function TraceRow({ label, value, checked, disabled, color }: { label: string; value: string; checked?: boolean; disabled?: boolean; color: string }) {
  return (
    <div className={clsx("flex h-[19px] items-center justify-between pr-[31px]", color)}>
      <Check label={label} checked={checked} disabled={disabled} />
      {label === "Roomsim Main" && (
        <svg viewBox="0 0 42 14" className="mr-[34px] ml-auto h-[14px] w-[42px]">
          <path d="M0 7h42" stroke="#007038" strokeWidth="1.5" />
          <rect x="9" y="1" width="23" height="12" rx="3" fill="#101010" stroke="#007038" strokeWidth="1.5" />
          <text x="20.5" y="10.5" textAnchor="middle" fontSize="9" fill="#ccc">1/96</text>
        </svg>
      )}
      <span>{value}</span>
    </div>
  );
}

export default function App() {
  return (
    <div className="relative flex min-h-screen flex-col overflow-hidden bg-linear-to-b from-[#424242] to-[#252525] font-['Liberation_Sans',Arial,sans-serif] text-[9px] leading-[12px] text-[#c8c8c8]">
      <header className="flex h-[19px] items-center bg-white font-['Open_Sans',sans-serif] text-[10px] text-[#8a8a8a]">
        <JavaIcon />
        <span className="ml-[3px]">REW V5.20.13</span>
        <div className="mr-auto ml-[39%] flex h-[1px] w-[200px] self-start bg-[#444]">
          <div className="w-[40px] bg-[#3c88d8]" />
        </div>
        <button aria-label="Minimize" className="w-[38px]"><Minus className="mx-auto size-[10px]" /></button>
        <button aria-label="Restore" className="w-[38px]"><Copy className="mx-auto size-[10px] -scale-y-100" /></button>
        <button aria-label="Close" className="w-[38px]"><X className="mx-auto size-[12px]" strokeWidth={1.5} /></button>
      </header>
      <nav className="flex h-[19px] items-center gap-[7px] border-b border-[#8a9098] bg-[#bfbfbf] pt-px pl-[5px] text-[#222]">
        {["File", "Tools", "Preferences", "Graph", "Help", "Donate"].map((m) => (
          <button key={m}>
            <u>{m[0]}</u>
            {m.slice(1)}
          </button>
        ))}
        <button>
          Pro <u>U</u>pgrades
        </button>
      </nav>
      <div className="flex h-[51px] justify-between pt-[5px] pr-[11px] pl-[2px]">
        {[leftTools, centreTools].map((group, i) => (
          <div key={i} className="flex">
            {group.map((t) => (
              <button
                key={t.label}
                className={clsx("flex flex-col items-center gap-[4px] whitespace-nowrap", t.width, "dim" in t && "text-[#858585]")}
              >
                {t.icon}
                {t.label}
              </button>
            ))}
          </div>
        ))}
        <button className="flex w-[51px] flex-col items-center gap-[4px]">
          <svg viewBox="0 0 26 26" className="size-[26px]">
            <path d="M3 22 15 9c-1-4 2-8 6-8l-3 4 1 3 3 1 3-3c1 4-3 7-7 6L6 25c-2 1-4-1-3-3Z" fill="#c8c8c8" stroke="#555" strokeWidth=".6" />
            <path d="M6 21 15 12" stroke="#555" strokeWidth="1.5" />
          </svg>
          Preferences
        </button>
      </div>
      <div className="flex h-[26px] items-center border-y border-[#4e4e4e] bg-[#585858] pt-[2px] text-[14px] font-bold">
        <p className="flex-1 pr-[8px] text-center whitespace-nowrap">
          REW is free software, but if you can afford to please{" "}
          <a href="#donate" className="text-[#0000ee] underline">click here</a> to make a donation to help support its continuing
          development
        </p>
        <button aria-label="Dismiss" className="pr-[6px]"><X className="size-[11px] text-[#2a2a2a]" strokeWidth={3} /></button>
      </div>

      <div className="flex flex-1">
        <aside className="w-[251px] shrink-0">
          <MeasurementCard />
        </aside>
        <div className="mt-[59px] mr-[1px] ml-[5px] flex h-[1058px] w-[13px] shrink-0 flex-col border-x border-[#666] bg-[#222]">
          <ScrollButton dir="up" />
          <div className="h-[196px]" />
          <div className="h-[149px] bg-linear-to-r from-[#c0c0c0] to-[#8e8e8e]" />
          <div className="flex-1" />
          <ScrollButton dir="down" />
        </div>
        <div className="flex min-w-0 flex-1 flex-col">
          <div className="flex h-[43px] items-start justify-between pr-[7px] pl-[7px]">
            <button className="mt-[6px] flex w-[26px] flex-col items-center gap-[4px]">
              <CameraIcon />
              Capture
            </button>
            <div role="tablist" className="mt-[14px] flex h-[18px] divide-x divide-[#6a6a6a] border border-[#888] bg-linear-to-b from-[#8c8c8c] to-[#b0b0b0] text-black">
              {tabs.map(([name, width], i) => (
                <button
                  key={name}
                  role="tab"
                  aria-selected={i === 0}
                  className={clsx("whitespace-nowrap", width, i === 0 && "bg-linear-to-b from-[#999] to-[#f4f4f4]")}
                >
                  {name}
                </button>
              ))}
            </div>
            <div className="mt-[5px] flex w-[231px] justify-end gap-[11px]">
              {graphTools.map((t) => (
                <button key={t.label} className="flex flex-col items-center gap-[5px] whitespace-nowrap">
                  {t.icon}
                  {t.label}
                </button>
              ))}
            </div>
          </div>
          <MainChart />
          <div className="mt-[1px] mr-[17px] ml-[32px] flex h-[13px] bg-[#222] outline outline-[#777]">
            <ScrollButton dir="left" />
            <div className="w-[627px]" />
            <div className="w-[829px] bg-linear-to-b from-[#b8b8b8] to-[#949494]" />
            <div className="flex-1" />
            <ScrollButton dir="right" />
          </div>
        </div>
      </div>

      <div className="mt-[2px] mr-[152px] mb-[5px] ml-[435px] grid h-[37px] grid-cols-5 bg-[#101010] pr-[6px] pl-[5px] shadow-[0_0_4px_#111]">
        <div>
          <TraceRow label="Roomsim Main" value="75,8 dB" checked color="text-[#007038]" />
          <TraceRow label="Soundcard Cal" value="dB" checked disabled color="text-[#808080]" />
        </div>
        <TraceRow label="Phase" value="-70 deg" color="text-[#8048a8]" />
        <TraceRow label="Min phase" value="deg" checked disabled color="text-[#808080]" />
        <TraceRow label="Excess phase" value="deg" checked disabled color="text-[#808080]" />
        <TraceRow label="Mic/Meter Cal" value="dB" checked disabled color="text-[#808080]" />
      </div>

      <footer className="flex h-[19px] items-center border-t border-[#777] whitespace-nowrap [&>span]:flex [&>span]:h-full [&>span]:items-center [&>span]:border-r [&>span]:border-[#666] [&>span]:pl-[3px]">
        <span className="-ml-[3px] w-[65px]">73/154MB</span>
        <span className="w-[36px]">96 kHz</span>
        <span className="w-[82px]">16-bit in, 16-bit out</span>
        <span className="w-[223px] justify-between pr-[6px] text-[#4848d8]">
          {[0, 1, 2, 3].map((n) => (
            <i key={n} className="font-['DejaVu_Sans_Mono',monospace] text-[9px] not-italic">0000 0000</i>
          ))}
        </span>
        <span className="w-[8px]" />
        <span className="w-[217px]">Peak input before clipping 120 dB SPL (uncalibrated)</span>
        <span className="mr-[170px] flex-1" />
      </footer>

      <RoomSimWindow />
    </div>
  );
}
